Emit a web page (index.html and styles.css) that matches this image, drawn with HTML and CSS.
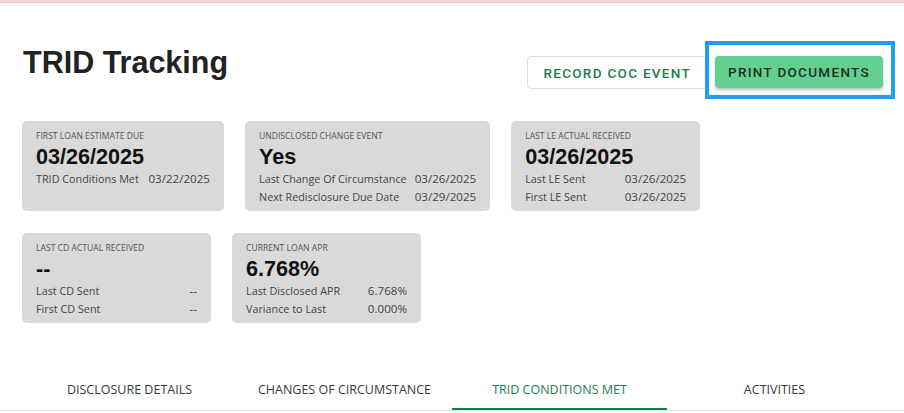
FILE: index.html
```html
<!DOCTYPE html>
<html lang="en">
<head>
<meta charset="utf-8">
<title>TRID Tracking</title>
<link rel="stylesheet" href="styles.css">
</head>
<body>
<div class="topbar"></div>
<div class="page">
  <div class="header">
    <h1 class="title">TRID Tracking</h1>
    <div class="actions">
      <button class="btn btn-outline">RECORD COC EVENT</button>
      <div class="highlight-wrap">
        <button class="btn btn-primary">PRINT DOCUMENTS</button>
      </div>
    </div>
  </div>

  <div class="cards-row first">
    <div class="card card-wide">
      <div class="card-label">FIRST LOAN ESTIMATE DUE</div>
      <div class="card-value">03/26/2025</div>
      <div class="card-rows">
        <span class="k">TRID Conditions Met</span><span class="v">03/22/2025</span>
      </div>
    </div>
    <div class="card">
      <div class="card-label">UNDISCLOSED CHANGE EVENT</div>
      <div class="card-value">Yes</div>
      <div class="card-rows">
        <span class="k">Last Change Of Circumstance</span><span class="v">03/26/2025</span>
        <span class="k">Next Redisclosure Due Date</span><span class="v">03/29/2025</span>
      </div>
    </div>
    <div class="card">
      <div class="card-label">LAST LE ACTUAL RECEIVED</div>
      <div class="card-value">03/26/2025</div>
      <div class="card-rows">
        <span class="k">Last LE Sent</span><span class="v">03/26/2025</span>
        <span class="k">First LE Sent</span><span class="v">03/26/2025</span>
      </div>
    </div>
  </div>

  <div class="cards-row">
    <div class="card">
      <div class="card-label">LAST CD ACTUAL RECEIVED</div>
      <div class="card-value">--</div>
      <div class="card-rows">
        <span class="k">Last CD Sent</span><span class="v">--</span>
        <span class="k">First CD Sent</span><span class="v">--</span>
      </div>
    </div>
    <div class="card">
      <div class="card-label">CURRENT LOAN APR</div>
      <div class="card-value">6.768%</div>
      <div class="card-rows">
        <span class="k">Last Disclosed APR</span><span class="v">6.768%</span>
        <span class="k">Variance to Last</span><span class="v">0.000%</span>
      </div>
    </div>
  </div>
</div>

<div class="tabs-wrap">
  <div class="tabs">
    <div class="tab">DISCLOSURE DETAILS</div>
    <div class="tab">CHANGES OF CIRCUMSTANCE</div>
    <div class="tab active">TRID CONDITIONS MET</div>
    <div class="tab">ACTIVITIES</div>
  </div>
</div>
</body>
</html>
```

FILE: styles.css
```css
* { box-sizing: border-box; }

body {
  margin: 0;
  background: #ffffff;
  font-family: "Open Sans", "Liberation Sans", sans-serif;
  color: #333;
}

.topbar {
  height: 3px;
  background: #f4d5d5;
  border-bottom: 1px solid #ecc9c9;
}

.page {
  padding: 0 21px 0 22px;
}

.header {
  display: flex;
  justify-content: space-between;
  align-items: flex-start;
  margin-top: 41px;
}

.title {
  margin: 0 0 0 1px;
  font-family: "Liberation Sans", Arial, sans-serif;
  font-weight: 700;
  font-size: 30.5px;
  line-height: 37px;
  color: #222;
}

.actions {
  display: flex;
  align-items: flex-start;
  gap: 8px;
  margin-top: 12px;
}

.btn {
  font-family: Roboto, "Liberation Sans", sans-serif;
  font-weight: 500;
  font-size: 13.5px;
  letter-spacing: 1.3px;
  border-radius: 4px;
  cursor: pointer;
}

.btn-outline {
  height: 33px;
  padding: 0 15px;
  background: #fff;
  border: 1px solid #dcdcdc;
  color: #1b7d4b;
}

.btn-primary {
  height: 32px;
  width: 168px;
  padding: 0;
  background: #63cf90;
  border: none;
  color: #1c2f24;
  box-shadow: 0 2px 3px rgba(0, 0, 0, 0.25);
}

.highlight-wrap {
  position: relative;
  display: flex;
}

.highlight-wrap::after {
  content: "";
  position: absolute;
  top: -15px;
  left: -10px;
  right: -12px;
  bottom: -11px;
  border: 4px solid #1f9df0;
  pointer-events: none;
}

.cards-row {
  display: flex;
  gap: 21px;
  margin-top: 22px;
}

.cards-row.first {
  margin-top: 32px;
}

.card {
  background: #d9d9d9;
  border-radius: 5px;
  padding: 9px 14px 5px;
  min-width: 189px;
}

.card-wide {
  min-width: 202px;
}

.card-label {
  font-size: 8.6px;
  line-height: 12px;
  color: #555;
  margin-bottom: 3px;
  white-space: nowrap;
}

.card-value {
  font-family: "Liberation Sans", Arial, sans-serif;
  font-weight: 700;
  font-size: 21.6px;
  line-height: 24px;
  color: #111;
  margin-bottom: 1px;
}

.card-rows {
  display: grid;
  grid-template-columns: 1fr auto;
  column-gap: 8px;
  font-size: 10.8px;
  line-height: 18px;
  color: #444;
  white-space: nowrap;
}

.card-rows .v {
  text-align: right;
  font-size: 11.6px;
}

.tabs-wrap {
  margin-top: 50px;
  border-bottom: 1px solid #dedede;
}

.tabs {
  display: grid;
  grid-template-columns: repeat(4, 215px);
  margin: 0 22px;
}

.tab {
  text-align: center;
  font-size: 12.5px;
  font-weight: 500;
  line-height: 16px;
  padding: 9px 0 10px;
  color: #3a3a3a;
  border-bottom: 2px solid transparent;
}

.tab.active {
  color: #1b7d4b;
  border-bottom-color: #1b7d4b;
}
```
